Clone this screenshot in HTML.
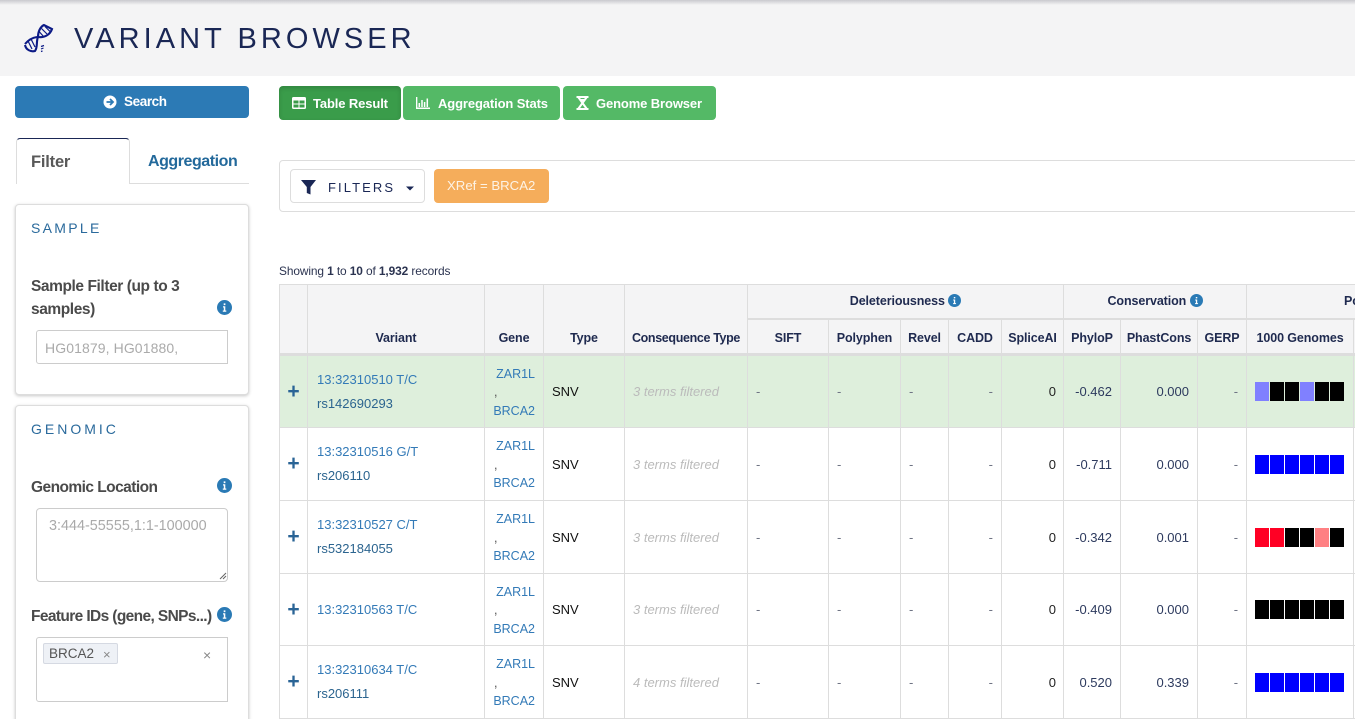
<!DOCTYPE html>
<html><head><meta charset="utf-8"><title>Variant Browser</title>
<style>
html,body{margin:0;padding:0;width:1355px;height:719px;overflow:hidden;background:#fff;font-family:"Liberation Sans",sans-serif;}
#w{position:relative;width:1355px;height:719px;overflow:hidden;background:#fff;}
.a{position:absolute;white-space:nowrap;line-height:1;}
#hd{position:absolute;left:0;top:0;width:1355px;height:76px;background:#f4f4f5;}
#hdsh{position:absolute;left:0;top:0;width:1355px;height:5px;background:linear-gradient(#c9c9ce,#f4f4f5);}
.btn{position:absolute;border-radius:4px;color:#fff;font-size:13px;font-weight:bold;box-sizing:border-box;}
.card{position:absolute;left:15px;width:234px;box-sizing:border-box;background:#fff;border:1px solid #ddd;border-radius:4px;box-shadow:0 1px 3px rgba(0,0,0,.22);}
.lab{color:#4a4a4a;font-size:15.5px;font-weight:bold;letter-spacing:-.42px;}
.ttl{color:#2a6a9c;font-size:14px;letter-spacing:2.3px;}
.inp{position:absolute;left:36px;width:192px;box-sizing:border-box;border:1px solid #ccc;border-radius:3px 0 0 3px;background:#fff;}
.bt{color:#fff;font-size:13px;font-weight:bold;letter-spacing:-.12px;}
table{position:absolute;left:279px;top:284px;border-collapse:collapse;table-layout:fixed;width:1274px;font-size:13px;}
th,td{border:1px solid #ddd;padding:0 8px;box-sizing:border-box;overflow:hidden;white-space:nowrap;}
th{background:#f4f4f5;color:#1f2a4f;font-size:12.5px;font-weight:bold;letter-spacing:-.1px;text-align:center;}
tr.sub th{border-bottom:3px solid #ddd;vertical-align:middle;padding:3px 2px 0;}
thead tr:first-child th{border-bottom:2px solid #ddd;}
td{color:#2d3a5e;}
tr.g td{background:#deefdc;}
.p{text-align:center;padding:0;color:#2a6496;font-size:21px;font-weight:bold;}
.v{line-height:24px;color:#2b648f;padding-left:9px;}
.v a{color:#337ab7;text-decoration:none;display:block;}
.ge{line-height:18.5px;text-align:right;color:#555;padding:2px 8px 0 0;font-size:12.5px;}
.ge a{color:#337ab7;text-decoration:none;display:block;}
.ge span{display:block;text-align:left;padding-left:9px;}
.sn{color:#111;}
.c{color:#bbb;font-style:italic;font-size:13px;padding-right:0;}
.d{color:#6f7484;}
.r{text-align:right;}
.z{color:#222;text-align:right;padding-right:7px;}
.bar{display:flex;height:19px;width:90px;}
.bar i{display:block;width:14px;height:100%;margin-right:1px;}
.K{background:#000}.B{background:#00f}.L{background:#8080ff}.R{background:#ff0024}.P{background:#ff8083}
td.bc{padding:0 0 0 8px;}
.hb{border-bottom:3px solid #ddd !important;vertical-align:bottom;padding-bottom:8px !important;}
</style></head><body>
<div id="w">
<div id="hd"></div><div id="hdsh"></div>
<svg class="a" style="left:23px;top:23px" width="31" height="31" viewBox="23 23 31 31" fill="none" stroke="#0c1a86">
<path d="M25 44Q30 38 37 37M25 45C26 50 31 52 35 51C38 47 36 41 38 37C38 32 40 27 44 25L52 29C50 35 44 38 38 37" stroke-width="2.100"/>
<path d="M39.500 32L44 37M41.500 28.500L47 34M45 26.500L50 31.500M31 39L35 47M28 41L32 49" stroke-width="1.200"/>
<path d="M41 46.500L44 45.500M41 49L43.500 48M41 51.500L42.500 51" stroke-width="1.200"/>
</svg>
<div class="a" style="left:74px;top:25px;font-size:29px;letter-spacing:4.050px;color:#1a2755;">VARIANT BROWSER</div>

<div class="btn" style="left:15px;top:86px;width:234px;height:32px;background:#2c7ab5;"></div>
<svg class="a" style="left:103px;top:95px" width="14" height="14" viewBox="0 0 14 14"><circle cx="7" cy="7" r="6.500" fill="#fff"/><path d="M3.500 7h6M7 4l3 3-3 3" stroke="#2c7ab5" stroke-width="1.800" fill="none"/></svg>
<div class="a" style="left:124px;top:95px;color:#fff;font-size:13.500px;font-weight:bold;letter-spacing:-.4px;">Search</div>

<div class="a" style="left:16px;top:138px;width:114px;height:46px;box-sizing:border-box;border:1px solid #ddd;border-top:1px solid #1a2755;border-bottom:0;border-radius:4px 4px 0 0;background:#fff;"></div>
<div class="a" style="left:130px;top:183px;width:119px;height:1px;background:#ddd;"></div>
<div class="a" style="left:31px;top:154px;font-size:16.500px;font-weight:bold;color:#595959;letter-spacing:-.2px;">Filter</div>
<div class="a" style="left:148px;top:154px;font-size:16px;font-weight:bold;color:#23699b;letter-spacing:-.45px;">Aggregation</div>

<div class="card" style="top:204px;height:191px;"></div>
<div class="a ttl" style="left:31px;top:221px;">SAMPLE</div>
<div class="a lab" style="left:31px;top:279px;">Sample Filter (up to 3</div>
<div class="a lab" style="left:31px;top:302px;">samples)</div>
<svg class="a" style="left:217px;top:300px" width="15" height="15" viewBox="0 0 15 15"><circle cx="7.500" cy="7.500" r="7.500" fill="#2a7ab5"/><path d="M6 6.300h2.300v4.200h1v1.200H5.800v-1.200h1V7.500H6zM6.700 3.400h1.700v1.700H6.700z" fill="#fff"/></svg>
<div class="inp" style="top:330px;height:34px;"></div>
<div class="a" style="left:45px;top:341px;font-size:14px;letter-spacing:.1px;color:#aaa;">HG01879, HG01880,</div>

<div class="card" style="top:405px;height:330px;"></div>
<div class="a ttl" style="left:31px;top:422px;letter-spacing:3px;">GENOMIC</div>
<div class="a lab" style="left:31px;top:480px;letter-spacing:-.55px;">Genomic Location</div>
<svg class="a" style="left:217px;top:478px" width="15" height="15" viewBox="0 0 15 15"><circle cx="7.500" cy="7.500" r="7.500" fill="#2a7ab5"/><path d="M6 6.300h2.300v4.200h1v1.200H5.800v-1.200h1V7.500H6zM6.700 3.400h1.700v1.700H6.700z" fill="#fff"/></svg>
<div class="inp" style="top:508px;height:74px;border-radius:4px;"></div>
<svg class="a" style="left:219px;top:572px" width="8" height="8" viewBox="0 0 8 8"><path d="M1 7l6-6M4 7l3-3" stroke="#666" stroke-width="1"/></svg>
<div class="a" style="left:49px;top:519px;font-size:14.400px;color:#aaa;">3:444-55555,1:1-100000</div>
<div class="a lab" style="left:31px;top:609px;letter-spacing:-.62px;">Feature IDs (gene, SNPs...)</div>
<svg class="a" style="left:217px;top:607px" width="15" height="15" viewBox="0 0 15 15"><circle cx="7.500" cy="7.500" r="7.500" fill="#2a7ab5"/><path d="M6 6.300h2.300v4.200h1v1.200H5.800v-1.200h1V7.500H6zM6.700 3.400h1.700v1.700H6.700z" fill="#fff"/></svg>
<div class="inp" style="top:637px;height:65px;"></div>
<div class="a" style="left:43px;top:643px;width:75px;height:21px;box-sizing:border-box;background:#eef1f6;border:1px solid #d5d9e2;border-radius:2px;"></div>
<div class="a" style="left:49px;top:647px;font-size:13.500px;color:#555;">BRCA2</div>
<div class="a" style="left:103px;top:648px;font-size:13px;color:#888;">×</div>
<div class="a" style="left:203px;top:648px;font-size:14px;color:#888;">×</div>

<div class="btn" style="left:279px;top:86px;width:122px;height:34px;background:#3a9c4a;box-shadow:inset 0 2px 5px rgba(0,0,0,.15);"></div>
<svg class="a" style="left:292px;top:97px" width="14" height="12" viewBox="0 0 14 12"><rect width="14" height="12" rx="1.500" fill="#fff"/><path d="M1.500 3.500h5v3h-5zM7.500 3.500h5v3h-5zM1.500 7.500h5v3h-5zM7.500 7.500h5v3h-5z" fill="#3a9c4a"/></svg>
<div class="a bt" style="left:313px;top:97px;">Table Result</div>
<div class="btn" style="left:403px;top:86px;width:157px;height:34px;background:#54b966;"></div>
<svg class="a" style="left:416px;top:97px" width="14" height="12" viewBox="0 0 14 12"><path d="M.6 0v11.300H14M3.300 6v4M6 3v7M8.600 5v5M11.300 1.500V10" stroke="#fff" stroke-width="1.500" fill="none"/></svg>
<div class="a bt" style="left:438px;top:97px;">Aggregation Stats</div>
<div class="btn" style="left:563px;top:86px;width:153px;height:34px;background:#54b966;"></div>
<svg class="a" style="left:576px;top:96px" width="13" height="14" viewBox="0 0 13 14"><path d="M.5 1h12M.5 13h12M2.500 1.500L10.500 12.500M10.500 1.500L2.500 12.500M4 4h5" stroke="#fff" stroke-width="2" fill="none"/></svg>
<div class="a bt" style="left:596px;top:97px;">Genome Browser</div>

<div class="a" style="left:279px;top:160px;width:1200px;height:52px;box-sizing:border-box;border:1px solid #ddd;border-radius:4px;"></div>
<div class="a" style="left:290px;top:169px;width:135px;height:34px;box-sizing:border-box;border:1px solid #ddd;border-radius:4px;"></div>
<svg class="a" style="left:301px;top:180px" width="15" height="15" viewBox="0 0 15 15"><path d="M0 0h15L9.500 7v7.500L5.800 13V7z" fill="#1a2755"/></svg>
<div class="a" style="left:328px;top:181px;font-size:13px;letter-spacing:2.100px;color:#1a2755;">FILTERS</div>
<svg class="a" style="left:406px;top:186px" width="8" height="5" viewBox="0 0 8 5"><path d="M0 0.500h8L4 4.500z" fill="#1a2755"/></svg>
<div class="a" style="left:434px;top:169px;width:115px;height:34px;background:#f5ad5b;border-radius:4px;"></div>
<div class="a" style="left:447px;top:179px;font-size:13.200px;color:#fdf3e6;">XRef = BRCA2</div>

<div class="a" style="left:279px;top:266px;font-size:11.900px;color:#2b3350;letter-spacing:-.1px;">Showing <b>1</b> to <b>10</b> of <b>1,932</b> records</div>

<table>
<colgroup><col style="width:28px"><col style="width:177px"><col style="width:59px"><col style="width:81px"><col style="width:123px"><col style="width:81px"><col style="width:72px"><col style="width:48px"><col style="width:53px"><col style="width:62px"><col style="width:57px"><col style="width:77px"><col style="width:49px"><col style="width:107px"><col style="width:200px"></colgroup>
<thead>
<tr style="height:34px">
<th rowspan="2" class="hb"></th>
<th rowspan="2" class="hb">Variant</th>
<th rowspan="2" class="hb" style="padding-left:2px;padding-right:2px">Gene</th>
<th rowspan="2" class="hb">Type</th>
<th rowspan="2" class="hb" style="padding-left:2px;padding-right:2px;letter-spacing:-.35px">Consequence Type</th>
<th colspan="5">Deleteriousness <svg width="13" height="13" viewBox="0 0 15 15" style="vertical-align:-2px"><circle cx="7.500" cy="7.500" r="7.500" fill="#2a7ab5"/><path d="M6 6.300h2.300v4.200h1v1.200H5.800v-1.200h1V7.500H6zM6.700 3.400h1.700v1.700H6.700z" fill="#fff"/></svg></th>
<th colspan="3">Conservation <svg width="13" height="13" viewBox="0 0 15 15" style="vertical-align:-2px"><circle cx="7.500" cy="7.500" r="7.500" fill="#2a7ab5"/><path d="M6 6.300h2.300v4.200h1v1.200H5.800v-1.200h1V7.500H6zM6.700 3.400h1.700v1.700H6.700z" fill="#fff"/></svg></th>
<th colspan="2" style="text-align:left;padding-left:97px">Population</th>
</tr>
<tr class="sub" style="height:36px">
<th>SIFT</th><th>Polyphen</th><th>Revel</th><th>CADD</th><th>SpliceAI</th><th>PhyloP</th><th>PhastCons</th><th>GERP</th><th>1000 Genomes</th><th></th>
</tr>
</thead>
<tbody>
<tr class="g" style="height:73px"><td class="p">+</td><td class="v"><a>13:32310510 T/C</a>rs142690293</td><td class="ge"><a>ZAR1L</a><span>,</span><a>BRCA2</a></td><td class="sn">SNV</td><td class="c">3 terms filtered</td><td class="d">-</td><td class="d">-</td><td class="d">-</td><td class="d r">-</td><td class="z">0</td><td class="r">-0.462</td><td class="r">0.000</td><td class="d r">-</td><td class="bc"><div class="bar"><i class="L"></i><i class="K"></i><i class="K"></i><i class="L"></i><i class="K"></i><i class="K"></i></div></td><td></td></tr>
<tr style="height:73px"><td class="p">+</td><td class="v"><a>13:32310516 G/T</a>rs206110</td><td class="ge"><a>ZAR1L</a><span>,</span><a>BRCA2</a></td><td class="sn">SNV</td><td class="c">3 terms filtered</td><td class="d">-</td><td class="d">-</td><td class="d">-</td><td class="d r">-</td><td class="z">0</td><td class="r">-0.711</td><td class="r">0.000</td><td class="d r">-</td><td class="bc"><div class="bar"><i class="B"></i><i class="B"></i><i class="B"></i><i class="B"></i><i class="B"></i><i class="B"></i></div></td><td></td></tr>
<tr style="height:73px"><td class="p">+</td><td class="v"><a>13:32310527 C/T</a>rs532184055</td><td class="ge"><a>ZAR1L</a><span>,</span><a>BRCA2</a></td><td class="sn">SNV</td><td class="c">3 terms filtered</td><td class="d">-</td><td class="d">-</td><td class="d">-</td><td class="d r">-</td><td class="z">0</td><td class="r">-0.342</td><td class="r">0.001</td><td class="d r">-</td><td class="bc"><div class="bar"><i class="R"></i><i class="R"></i><i class="K"></i><i class="K"></i><i class="P"></i><i class="K"></i></div></td><td></td></tr>
<tr style="height:72px"><td class="p">+</td><td class="v"><a>13:32310563 T/C</a></td><td class="ge"><a>ZAR1L</a><span>,</span><a>BRCA2</a></td><td class="sn">SNV</td><td class="c">3 terms filtered</td><td class="d">-</td><td class="d">-</td><td class="d">-</td><td class="d r">-</td><td class="z">0</td><td class="r">-0.409</td><td class="r">0.000</td><td class="d r">-</td><td class="bc"><div class="bar"><i class="K"></i><i class="K"></i><i class="K"></i><i class="K"></i><i class="K"></i><i class="K"></i></div></td><td></td></tr>
<tr style="height:73px"><td class="p">+</td><td class="v"><a>13:32310634 T/C</a>rs206111</td><td class="ge"><a>ZAR1L</a><span>,</span><a>BRCA2</a></td><td class="sn">SNV</td><td class="c">4 terms filtered</td><td class="d">-</td><td class="d">-</td><td class="d">-</td><td class="d r">-</td><td class="z">0</td><td class="r">0.520</td><td class="r">0.339</td><td class="d r">-</td><td class="bc"><div class="bar"><i class="B"></i><i class="B"></i><i class="B"></i><i class="B"></i><i class="B"></i><i class="B"></i></div></td><td></td></tr>
</tbody>
</table>
</div>
</body></html>
